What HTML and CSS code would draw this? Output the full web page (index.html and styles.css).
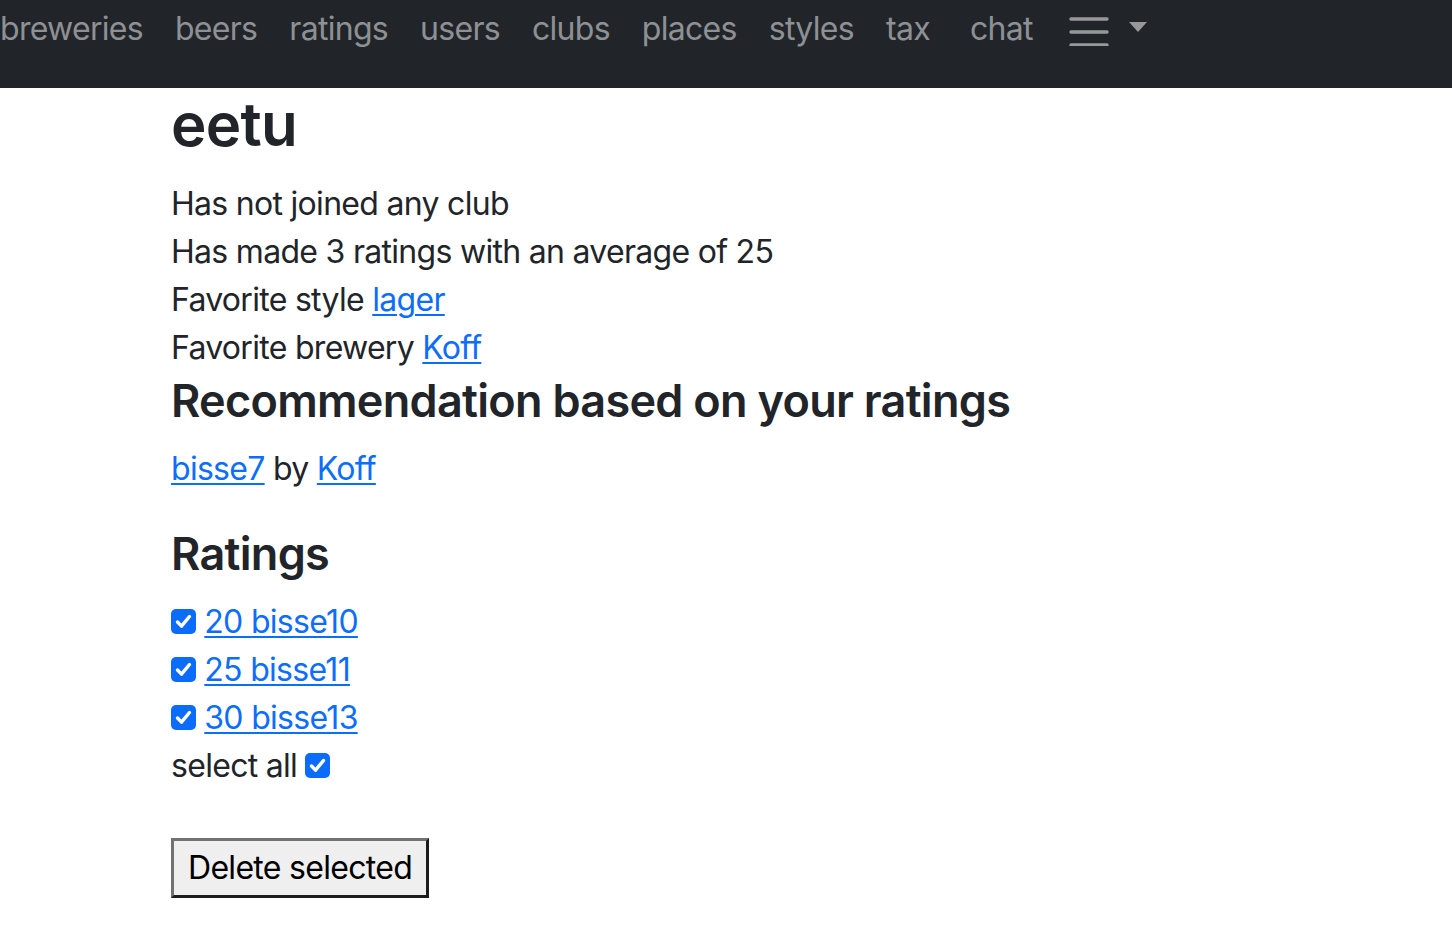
FILE: index.html
```html
<!DOCTYPE html>
<html lang="en">
<head>
<meta charset="utf-8">
<title>eetu</title>
<link rel="stylesheet" href="styles.css">
</head>
<body>
<nav class="navbar">
  <ul class="nav-list">
    <li><a class="nav-link first" href="#">breweries</a></li>
    <li><a class="nav-link" href="#">beers</a></li>
    <li><a class="nav-link" href="#">ratings</a></li>
    <li><a class="nav-link" href="#">users</a></li>
    <li><a class="nav-link" href="#">clubs</a></li>
    <li><a class="nav-link" href="#">places</a></li>
    <li><a class="nav-link" href="#">styles</a></li>
    <li><a class="nav-link" href="#">tax</a></li>
    <li><a class="nav-link chat" href="#">chat</a></li>
    <li class="menu">
      <svg class="hamburger" width="40" height="30" viewBox="0 0 40 30" aria-hidden="true">
        <path d="M2 3H38M2 16H38M2 29H38" stroke="currentColor" stroke-width="3.4" stroke-linecap="round"/>
      </svg>
      <svg class="caret" width="18" height="10" viewBox="0 0 18 10" aria-hidden="true">
        <path d="M0 0H18L9 10Z" fill="currentColor"/>
      </svg>
    </li>
  </ul>
</nav>
<main class="content">
  <h1 class="title">eetu</h1>
  <p class="line">Has not joined any club</p>
  <p class="line">Has made 3 ratings with an average of 25</p>
  <p class="line">Favorite style <a href="#">lager</a></p>
  <p class="line">Favorite brewery <a href="#">Koff</a></p>
  <h2 class="heading rec">Recommendation based on your ratings</h2>
  <p class="line recline"><a href="#">bisse7</a> by <a href="#">Koff</a></p>
  <h2 class="heading ratings">Ratings</h2>
  <form class="ratings-form">
    <ul class="rating-list">
      <li class="line"><span class="check"><svg viewBox="0 0 25 25" width="25" height="25"><rect width="25" height="25" rx="5" fill="#0b6bfb"/><path d="M6.5 13l4 4.2L18.5 7.5" fill="none" stroke="#fff" stroke-width="3.4" stroke-linecap="round" stroke-linejoin="round"/></svg></span> <a href="#">20 bisse10</a></li>
      <li class="line"><span class="check"><svg viewBox="0 0 25 25" width="25" height="25"><rect width="25" height="25" rx="5" fill="#0b6bfb"/><path d="M6.5 13l4 4.2L18.5 7.5" fill="none" stroke="#fff" stroke-width="3.4" stroke-linecap="round" stroke-linejoin="round"/></svg></span> <a href="#">25 bisse11</a></li>
      <li class="line"><span class="check"><svg viewBox="0 0 25 25" width="25" height="25"><rect width="25" height="25" rx="5" fill="#0b6bfb"/><path d="M6.5 13l4 4.2L18.5 7.5" fill="none" stroke="#fff" stroke-width="3.4" stroke-linecap="round" stroke-linejoin="round"/></svg></span> <a href="#">30 bisse13</a></li>
      <li class="line">select all <span class="check"><svg viewBox="0 0 25 25" width="25" height="25"><rect width="25" height="25" rx="5" fill="#0b6bfb"/><path d="M6.5 13l4 4.2L18.5 7.5" fill="none" stroke="#fff" stroke-width="3.4" stroke-linecap="round" stroke-linejoin="round"/></svg></span></li>
    </ul>
    <button type="button" class="btn">Delete selected</button>
  </form>
</main>
</body>
</html>
```

FILE: styles.css
```css
* { box-sizing: border-box; }
html, body { margin: 0; padding: 0; }
body {
  font-family: Inter, "Noto Sans", sans-serif;
  font-size: 32px;
  line-height: 48px;
  letter-spacing: -0.022em;
  color: #212529;
  background: #fff;
}
a { color: #0d6efd; text-decoration: underline; text-underline-offset: 3px; text-decoration-thickness: 2px; }

.navbar {
  background: #212529;
  height: 88px;
}
.nav-list {
  list-style: none;
  margin: 0;
  padding: 0;
  display: flex;
  align-items: flex-start;
}
.nav-link {
  display: block;
  padding: 5px 16px 0;
  color: #8e9194;
  text-decoration: none;
  line-height: 48px;
}
.nav-link.first { padding-left: 0; }
.nav-link.chat { padding-left: 24px; }
.menu {
  display: flex;
  align-items: flex-start;
  color: #96989a;
  padding-left: 20px;
}
.hamburger { display: block; margin-top: 16px; }
.caret { display: block; margin-top: 22px; margin-left: 20px; }

.content { padding-left: 171px; }
.title {
  font-size: 60px;
  font-weight: 600;
  line-height: 72px;
  margin: 0 0 20px;
}
.line { margin: 0; }
.heading {
  font-size: 45px;
  font-weight: 600;
  line-height: 54px;
  margin: 0;
}
.rec { margin-top: 2px; }
.recline { margin-top: 17px; }
.ratings { margin-top: 34px; }
.rating-list { list-style: none; margin: 17px 0 0; padding: 0; }
.check { display: inline-block; width: 25px; height: 25px; vertical-align: -1px; }
.check svg { display: block; }
.btn {
  margin-top: 48px;
  font-family: Inter, "Noto Sans", sans-serif;
  font-size: 32px;
  letter-spacing: -0.022em;
  line-height: 40px;
  color: #000;
  background: #efefef;
  border-style: solid;
  border-width: 3px;
  border-color: #727272 #1c1c1c #1c1c1c #727272;
  padding: 7px 14px;
  height: 60px;
}
```
